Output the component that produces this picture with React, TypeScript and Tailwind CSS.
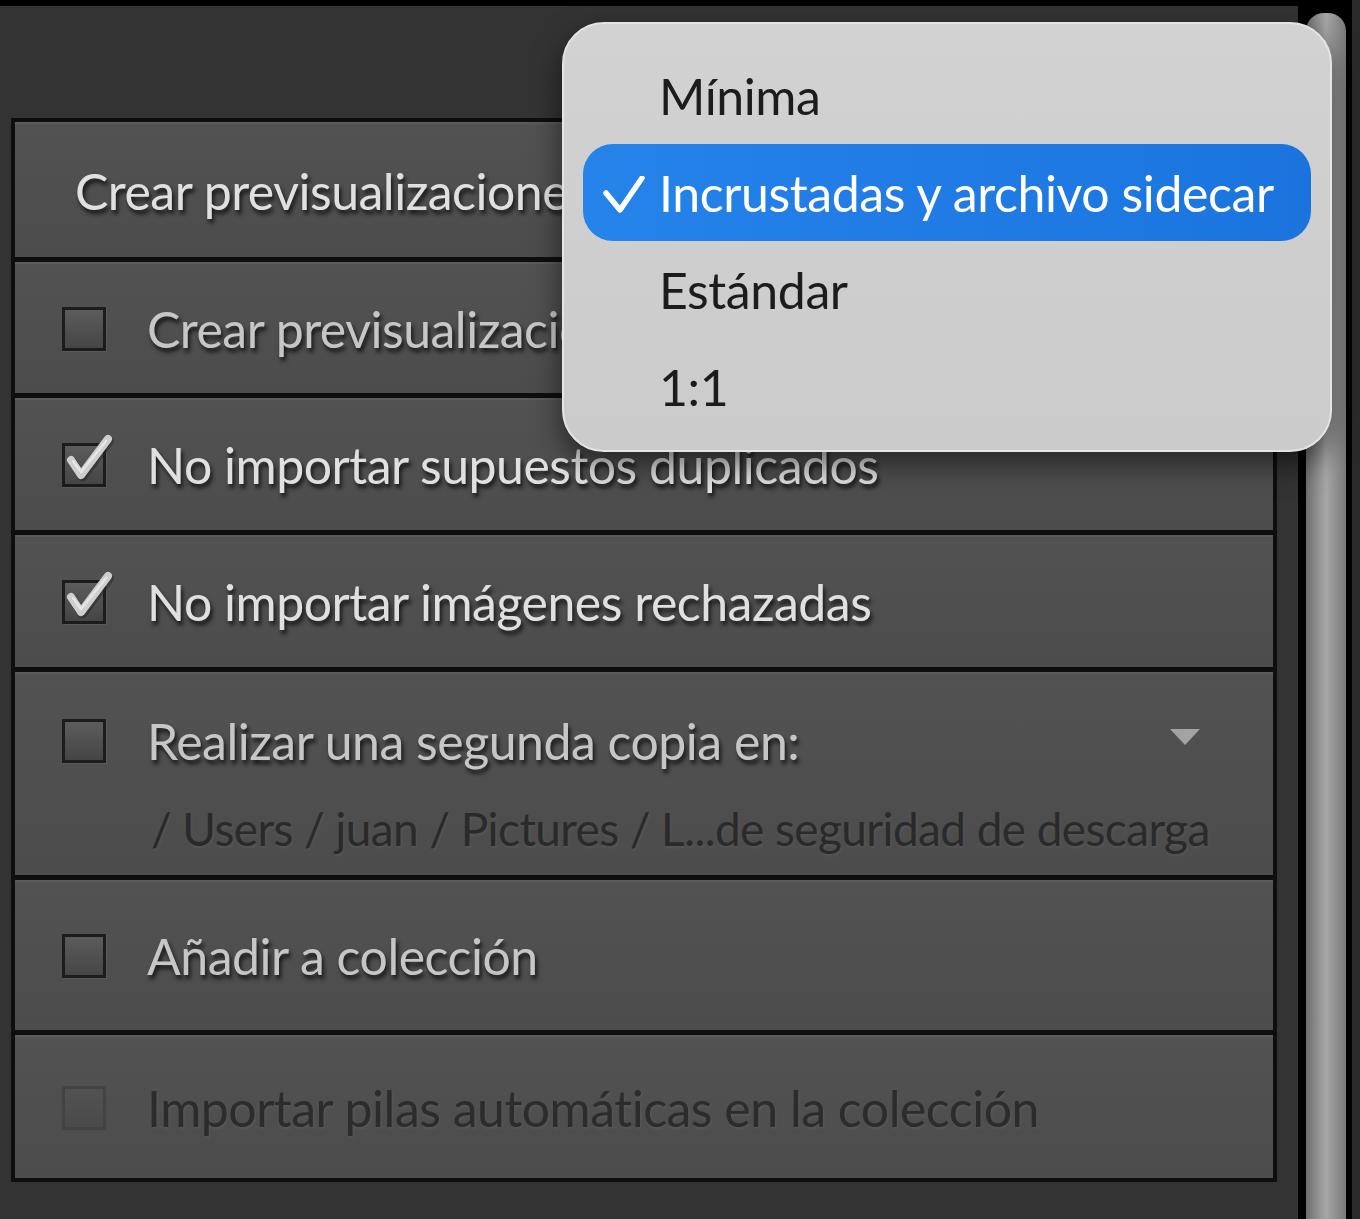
import React from 'react'

const FONT = "font-['Lato','Open_Sans',sans-serif]"
const SHADOW_DARK = '[text-shadow:2px_4px_4px_rgba(0,0,0,0.75)]'
const SHADOW_LIGHT = '[text-shadow:1px_2px_3px_rgba(255,255,255,0.06)]'

type Row = {
  label: string
  height: string
  box?: 'on' | 'off' | 'disabled'
  tone: 'bright' | 'mid' | 'dark'
  sub?: string
  arrow?: boolean
}

const rows: Row[] = [
  { label: 'Crear previsualizaciones', height: 'h-[135px]', tone: 'bright' },
  { label: 'Crear previsualizaciones inteligentes', height: 'h-[131px]', box: 'off', tone: 'mid' },
  { label: 'No importar supuestos duplicados', height: 'h-[132px]', box: 'on', tone: 'bright' },
  { label: 'No importar imágenes rechazadas', height: 'h-[132px]', box: 'on', tone: 'bright' },
  {
    label: 'Realizar una segunda copia en:',
    height: 'h-[203px]',
    box: 'off',
    tone: 'mid',
    sub: '/ Users / juan / Pictures / L...de seguridad de descarga',
    arrow: true,
  },
  { label: 'Añadir a colección', height: 'h-[150px]', box: 'off', tone: 'mid' },
  { label: 'Importar pilas automáticas en la colección', height: 'h-[143px]', box: 'disabled', tone: 'dark' },
]

const menuItems = ['Mínima', 'Incrustadas y archivo sidecar', 'Estándar', '1:1']

function CheckBox({ state }: { state: 'on' | 'off' | 'disabled' }) {
  if (state === 'disabled') {
    return <span className="relative block w-[44px] h-[44px] shrink-0 border-[3px] border-[#434343] bg-gradient-to-b from-[#525252] to-[#4a4a4a]" />
  }
  return (
    <span className="relative block w-[44px] h-[44px] shrink-0 border-[3px] border-[#1c1c1c] bg-gradient-to-b from-[#5c5c5c] to-[#454545] shadow-[1px_1px_0_rgba(255,255,255,0.06)]">
      {state === 'on' && (
        <svg className="absolute left-[-3px] top-[-3px] overflow-visible" width="44" height="44" viewBox="0 0 44 44">
          <path d="M9 17 L19 32 L46 -4" fill="none" stroke="#262626" strokeWidth="9" strokeLinecap="round" strokeLinejoin="round" opacity="0.5" transform="translate(1.5 2)" />
          <path d="M9 17 L19 32 L46 -4" fill="none" stroke="#cfcfcf" strokeWidth="8" strokeLinecap="round" strokeLinejoin="round" />
          <path d="M11 18 L19 29 L44 -2" fill="none" stroke="#e6e6e6" strokeWidth="2.5" strokeLinecap="round" strokeLinejoin="round" />
        </svg>
      )}
    </span>
  )
}

function PanelRow({ row }: { row: Row }) {
  const tone =
    row.tone === 'bright'
      ? `text-[#e0e0e0] ${SHADOW_DARK}`
      : row.tone === 'mid'
        ? `text-[#c6c6c6] ${SHADOW_DARK}`
        : `text-[#2c2c2c] ${SHADOW_LIGHT}`

  return (
    <div
      className={`relative ${row.height} bg-gradient-to-b from-[#525252] to-[#4c4c4c] border-t-[2px] border-[#5b5b5b] flex flex-col ${row.sub ? 'justify-start pt-[37px]' : 'justify-center'}`}
    >
      <div className={`flex items-center ${row.box ? 'pl-[47px] gap-[41px]' : 'pl-[60px]'}`}>
        {row.box && <CheckBox state={row.box} />}
        <span className={`text-[50px] leading-[60px] whitespace-nowrap tracking-[-0.5px] ${tone}`}>{row.label}</span>
      </div>
      {row.sub && (
        <div className={`pl-[136px] mt-[28px] text-[46px] leading-[60px] whitespace-nowrap tracking-[-0.6px] text-[#2a2a2a] ${SHADOW_LIGHT}`}>
          {row.sub}
        </div>
      )}
      {row.arrow && (
        <svg className="absolute left-[1154px] top-[54px]" width="32" height="18" viewBox="0 0 32 18">
          <path d="M1 1 H31 L16 17 Z" fill="#a3a3a3" />
        </svg>
      )}
    </div>
  )
}

function PreviewMenu() {
  return (
    <div className="absolute left-[562px] top-[22px] w-[770px] h-[430px] rounded-[42px] bg-gradient-to-b from-[#d2d2d2] to-[#cbcbcb] border-[2px] border-[#e4e4e4] shadow-[0_12px_30px_rgba(0,0,0,0.55)] px-[19px] pt-[23px]">
      {menuItems.map((item, i) => {
        const active = i === 1
        return (
          <div
            key={item}
            className={`relative h-[97px] flex items-center pl-[76px] rounded-[30px] ${active ? 'bg-gradient-to-r from-[#2583ea] to-[#1b74de] text-white' : 'text-[#1c1c1c]'}`}
          >
            {active && (
              <svg className="absolute left-[20px] top-[32px]" width="42" height="40" viewBox="0 0 42 40">
                <path d="M3 17 L17 34 L39 2" fill="none" stroke="#fff" strokeWidth="5.5" strokeLinecap="round" strokeLinejoin="round" />
              </svg>
            )}
            <span className="text-[50px] leading-[60px] whitespace-nowrap tracking-[-0.4px]">{item}</span>
          </div>
        )
      })}
    </div>
  )
}

export default function App() {
  return (
    <div className={`relative w-[1360px] h-[1219px] overflow-hidden bg-[#333333] flex ${FONT}`}>
      {/* main panel column */}
      <div className="w-[1298px] shrink-0 flex flex-col border-t-[6px] border-black">
        <div className="pl-[11px] pr-[21px] pt-[112px]">
          <div className="border-[4px] border-[#0e0e0e] bg-[#0e0e0e] flex flex-col gap-[5px]">
            {rows.map(r => (
              <PanelRow key={r.label} row={r} />
            ))}
          </div>
        </div>
      </div>

      {/* scrollbar */}
      <div className="flex-1 flex bg-black">
        <div className="w-[8px] bg-black" />
        <div className="w-[40px] mt-[13px] rounded-t-[18px] bg-gradient-to-r from-[#6f6f6f] via-[#a7a7a7] to-[#7a7a7a]" />
        <div className="w-[6px] bg-black" />
        <div className="flex-1 bg-[#2a2a2a]" />
      </div>

      <PreviewMenu />
    </div>
  )
}
